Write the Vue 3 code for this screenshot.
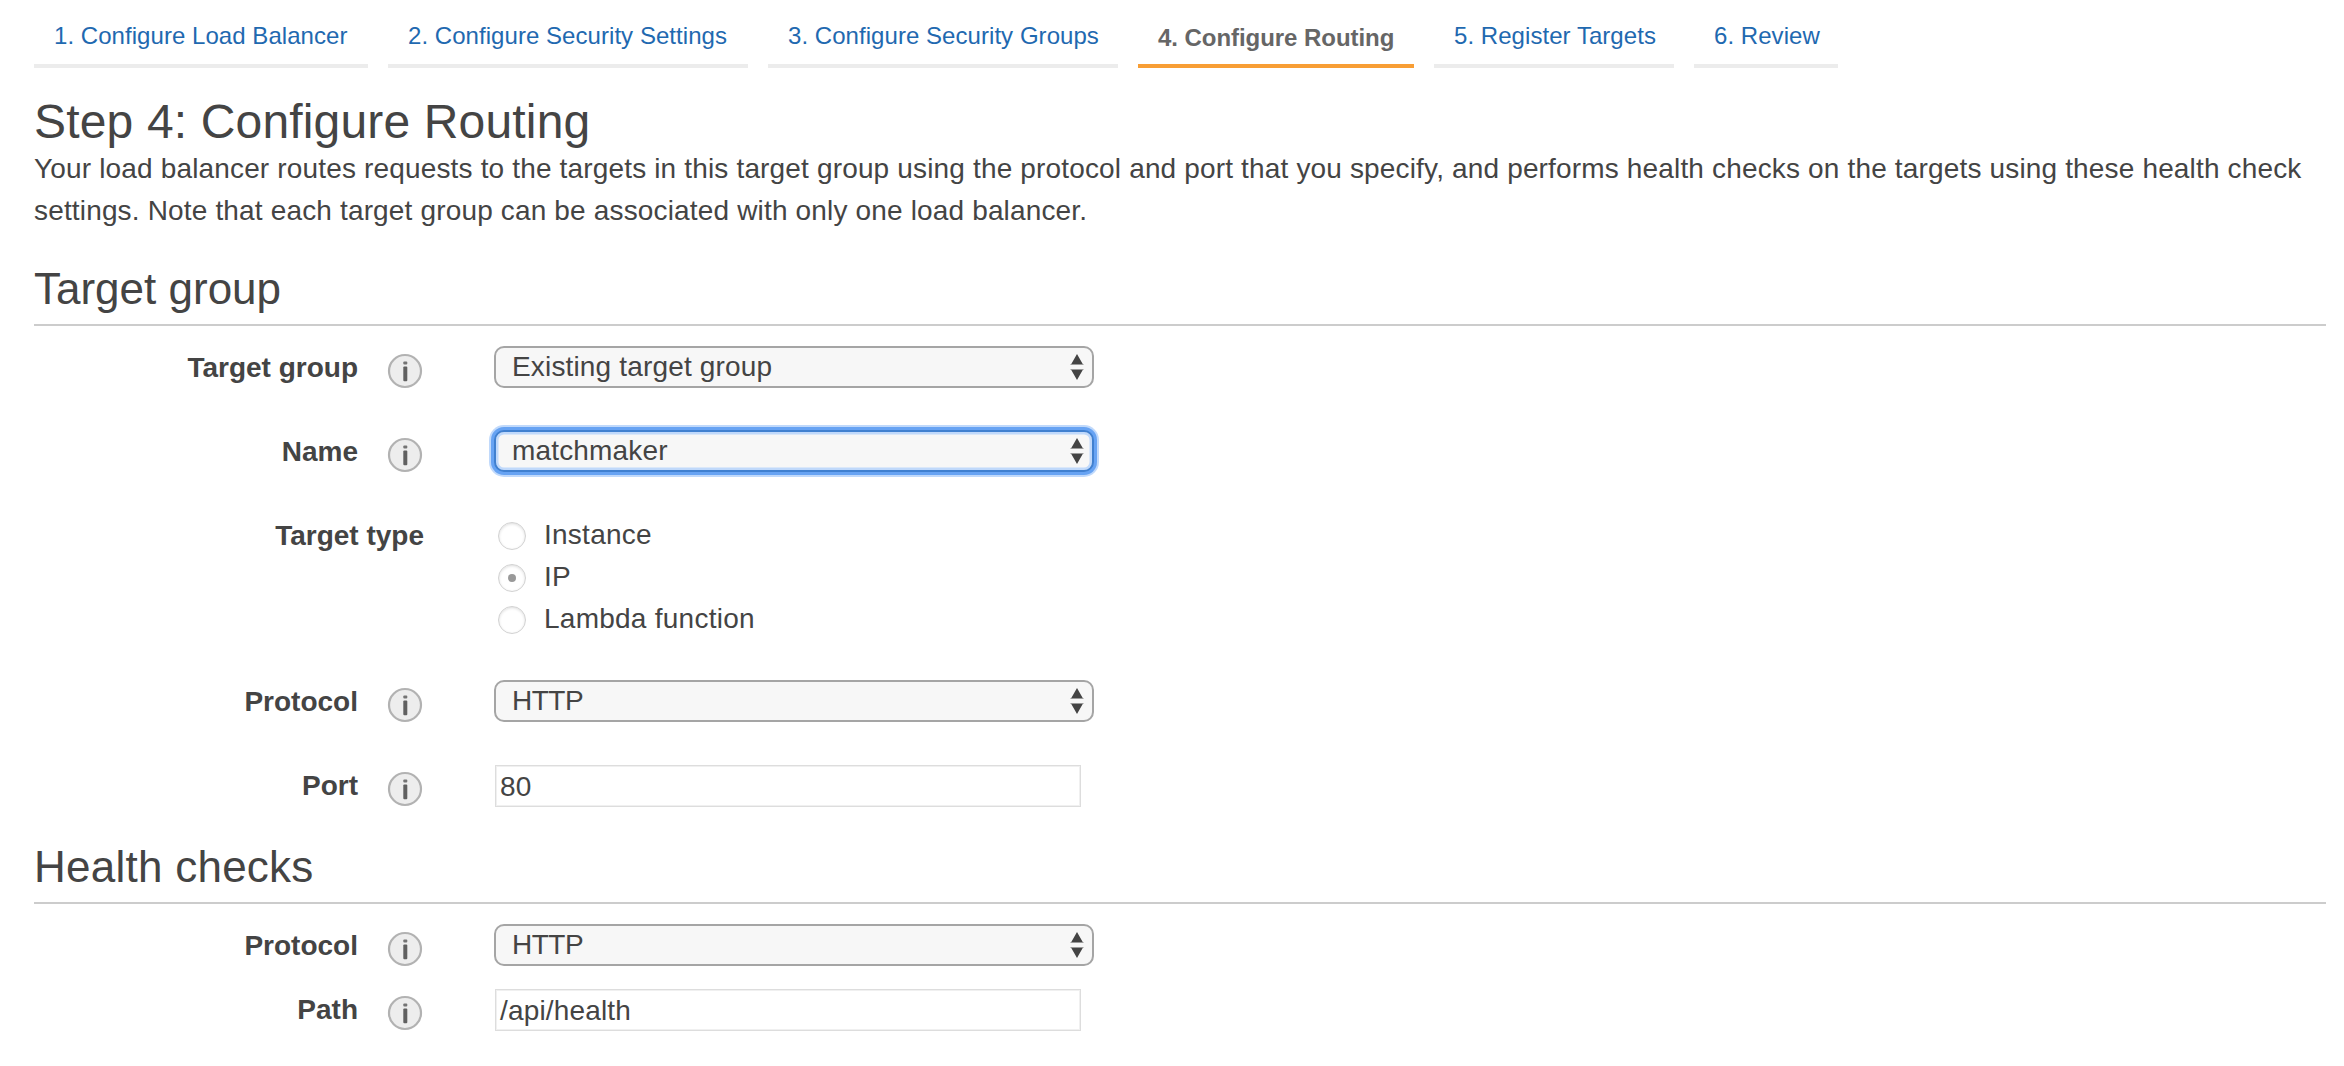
<script setup>
const steps = [
  { text: '1. Configure Load Balancer', width: 334 },
  { text: '2. Configure Security Settings', width: 360 },
  { text: '3. Configure Security Groups', width: 350 },
  { text: '4. Configure Routing', width: 276, active: true },
  { text: '5. Register Targets', width: 240 },
  { text: '6. Review', width: 144 },
]

const targetRows = [
  { label: 'Target group', kind: 'select', value: 'Existing target group' },
  { label: 'Name', kind: 'select', value: 'matchmaker', focused: true },
  { label: 'Target type', kind: 'radios', options: ['Instance', 'IP', 'Lambda function'], value: 'IP' },
  { label: 'Protocol', kind: 'select', value: 'HTTP' },
  { label: 'Port', kind: 'input', value: '80' },
]

const healthRows = [
  { label: 'Protocol', kind: 'select', value: 'HTTP' },
  { label: 'Path', kind: 'input', value: '/api/health' },
]

const sections = [
  { id: 'target', title: 'Target group', rows: targetRows },
  { id: 'health', title: 'Health checks', rows: healthRows },
]
</script>

<template>
  <main class="page">
    <nav class="steps">
      <a
        v-for="step in steps"
        :key="step.text"
        class="step"
        :class="{ active: step.active }"
        :style="{ width: step.width + 'px' }"
      >{{ step.text }}</a>
    </nav>

    <h1 class="title">Step 4: Configure Routing</h1>
    <p class="intro">
      <span class="line">Your load balancer routes requests to the targets in this target group using the protocol and port that you specify, and performs health checks on the targets using these health check</span>
      <span class="line">settings. Note that each target group can be associated with only one load balancer.</span>
    </p>

    <section v-for="section in sections" :key="section.id" :class="section.id">
      <h2 class="heading">{{ section.title }}</h2>
      <div class="rows">
        <div v-for="row in section.rows" :key="row.label" class="row" :class="{ tall: row.kind === 'radios' }">
          <div class="label" :class="{ wide: row.kind === 'radios' }">{{ row.label }}</div>
          <svg v-if="row.kind !== 'radios'" class="info" viewBox="0 0 36 36">
            <circle cx="18" cy="18" r="16" fill="#ededed" stroke="#b2b2b2" stroke-width="2.2" />
            <rect x="16.3" y="8.4" width="4" height="3.2" rx="1" fill="#747474" />
            <rect x="16.3" y="13.6" width="4" height="14.6" rx="1" fill="#606060" />
          </svg>

          <div v-if="row.kind === 'select'" class="select" :class="{ focused: row.focused }">
            <span :class="{ caps: row.value === 'HTTP' }">{{ row.value }}</span>
            <svg class="arrows" viewBox="0 0 14 28">
              <path d="M7 1 L13 11.5 H1 Z M1 16.5 H13 L7 27 Z" fill="#444" />
              <path d="M0.5 11.5 H13.5 M0.5 16.5 H13.5" stroke="#9a9a9a" stroke-width="1" />
            </svg>
          </div>

          <div v-else-if="row.kind === 'input'" class="field">{{ row.value }}</div>

          <div v-else class="options">
            <div v-for="option in row.options" :key="option" class="option">
              <span class="radio" :class="{ checked: option === row.value }"></span>
              <span>{{ option }}</span>
            </div>
          </div>
        </div>
      </div>
    </section>
  </main>
</template>

<style>
body {
  margin: 0;
  background: #fff;
}
</style>

<style scoped>
.page {
  box-sizing: border-box;
  height: 1066px;
  padding: 0 18px 0 34px;
  overflow: hidden;
  color: #444;
  font: 28px/42px "Liberation Sans", Arial, sans-serif;
  letter-spacing: 0.16px;
}
.steps {
  display: flex;
  gap: 20px;
  height: 68px;
}
.step {
  box-sizing: border-box;
  padding: 15px 0 0 20px;
  border-bottom: 4px solid #ececec;
  color: #1f69b0;
  font-size: 24px;
  line-height: 42px;
  letter-spacing: 0.05px;
  white-space: nowrap;
}
.step.active {
  padding-top: 17px;
  border-bottom-color: #f89e35;
  color: #666;
  font-weight: bold;
  letter-spacing: -0.05px;
}
.title {
  margin: 26px 0 0;
  height: 54px;
  font-size: 48px;
  font-weight: normal;
  line-height: 56px;
  white-space: nowrap;
}
.intro {
  margin: 0;
}
.line {
  display: block;
  white-space: nowrap;
}
.heading {
  box-sizing: border-box;
  height: 72px;
  margin: 22px 0 0;
  border-bottom: 2px solid #ccc;
  font-size: 44px;
  font-weight: normal;
  line-height: 70px;
  letter-spacing: 0;
}
.health .heading {
  margin-top: 26px;
  letter-spacing: 0.25px;
}
.rows {
  display: flex;
  flex-direction: column;
  padding-top: 20px;
}
.target .rows {
  gap: 42px;
}
.health .rows {
  gap: 22px;
}
.row {
  display: flex;
  height: 42px;
}
.row.tall {
  height: 124px;
}
.label {
  flex: none;
  width: 324px;
  padding-top: 1px;
  font-weight: bold;
  letter-spacing: 0;
  text-align: right;
}
.label.wide {
  width: 390px;
  margin-right: 70px;
}
.info {
  flex: none;
  width: 36px;
  height: 36px;
  margin: 7px 71px 0 29px;
}
.select {
  box-sizing: border-box;
  display: flex;
  justify-content: space-between;
  width: 600px;
  height: 42px;
  padding: 0 8px 0 16px;
  border: 2px solid #a5a5a5;
  border-radius: 10px;
  background: #f7f7f7;
  line-height: 37px;
}
.select.focused {
  border-color: #4080d0;
  box-shadow: 0 0 0 3px #67a3f3, 0 0 0 5px #c0d9fb, inset 0 0 0 2.5px #c0d9fb;
}
.caps {
  letter-spacing: -0.5px;
}
.arrows {
  width: 14px;
  height: 28px;
  margin-top: 5px;
}
.field {
  box-sizing: border-box;
  width: 586px;
  height: 42px;
  margin: 1px 0 0 1px;
  padding-left: 4px;
  border: 1px solid #ddd;
  box-shadow: inset 0 0 0 1px #f0f0f0;
  line-height: 41px;
}
.option {
  display: flex;
  height: 42px;
  line-height: 41px;
  letter-spacing: 0.25px;
}
.radio {
  box-sizing: border-box;
  display: flex;
  align-items: center;
  justify-content: center;
  width: 28px;
  height: 28px;
  margin: 8px 18px 0 4px;
  border: 1px solid #d2d2d2;
  border-radius: 50%;
  box-shadow: inset 0 1px 3px #ddd;
}
.radio.checked::after {
  width: 8px;
  height: 8px;
  border-radius: 50%;
  background: #999;
  content: "";
}
</style>
